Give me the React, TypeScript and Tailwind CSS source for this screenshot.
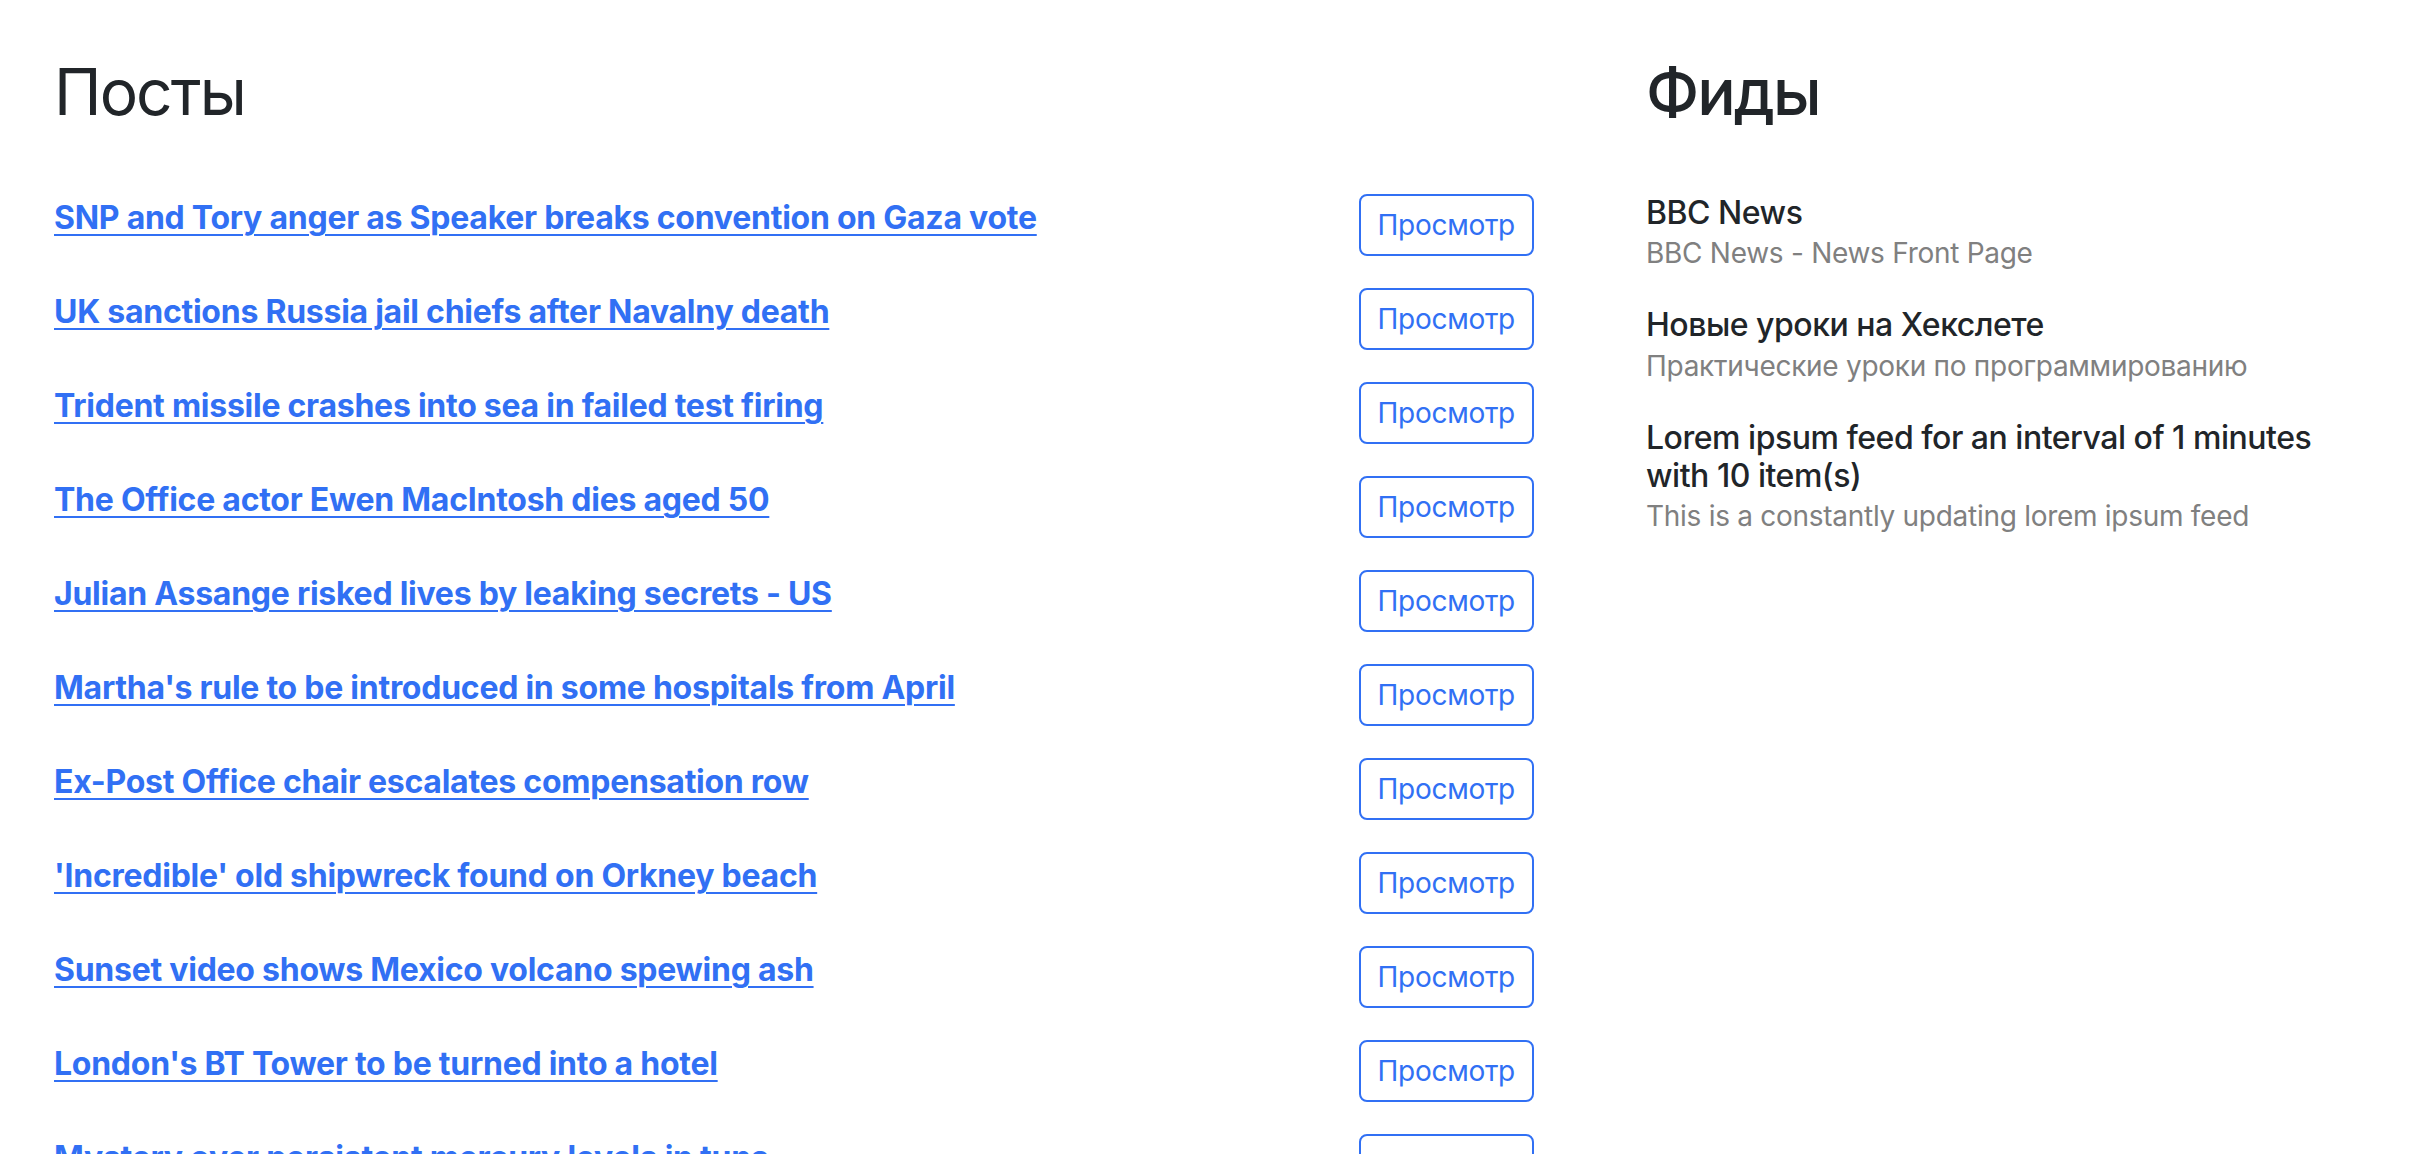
import React from "react";

const POSTS = [
  "SNP and Tory anger as Speaker breaks convention on Gaza vote",
  "UK sanctions Russia jail chiefs after Navalny death",
  "Trident missile crashes into sea in failed test firing",
  "The Office actor Ewen MacIntosh dies aged 50",
  "Julian Assange risked lives by leaking secrets - US",
  "Martha's rule to be introduced in some hospitals from April",
  "Ex-Post Office chair escalates compensation row",
  "'Incredible' old shipwreck found on Orkney beach",
  "Sunset video shows Mexico volcano spewing ash",
  "London's BT Tower to be turned into a hotel",
  "Mystery over persistent mercury levels in tuna",
  "Lorem ipsum dolor sit amet, consectetur adipiscing elit",
  "Sed do eiusmod tempor incididunt ut labore",
];

const FEEDS = [
  { title: "BBC News", description: "BBC News - News Front Page" },
  { title: "Новые уроки на Хекслете", description: "Практические уроки по программированию" },
  {
    title: "Lorem ipsum feed for an interval of 1 minutes with 10 item(s)",
    description: "This is a constantly updating lorem ipsum feed",
  },
];

export default function App() {
  return (
    <div className="min-h-screen bg-white font-['Inter','Liberation_Sans',sans-serif] text-[#212529]">
      <div className="flex pt-[22px]">
        {/* posts */}
        <div className="w-[1590px] shrink-0 pl-[22px] pr-6">
          <div className="p-8">
            <h2 className="text-[64px] leading-[1.2] font-normal tracking-[-0.03em] mb-4">Посты</h2>
          </div>
          <ul className="-mt-[1px]">
            {POSTS.map((title, i) => (
              <li key={i} className="flex items-start justify-between px-8 py-4">
                <a
                  href="#"
                  className="text-[32px] leading-[1.5] font-bold tracking-[-0.008em] text-[#3170f4] underline decoration-2 underline-offset-[5px]"
                >
                  {title}
                </a>
                <button
                  type="button"
                  className="shrink-0 h-[62px] px-[17px] border-2 border-[#3170f4] rounded-lg text-[28px] leading-[1.5] tracking-[-0.01em] text-[#3170f4] bg-white"
                >
                  Просмотр
                </button>
              </li>
            ))}
          </ul>
        </div>

        {/* feeds */}
        <div className="w-[796px] shrink-0 px-6">
          <div className="p-8">
            <h2 className="text-[64px] leading-[1.2] font-medium tracking-[-0.03em] mb-4">Фиды</h2>
          </div>
          <ul className="-mt-[1px]">
            {FEEDS.map((feed) => (
              <li key={feed.title} className="px-8 py-4">
                <h3 className="text-[32px] leading-[1.2] font-medium tracking-[-0.015em] m-0">{feed.title}</h3>
                <p className="text-[28px] leading-[1.5] tracking-[-0.01em] text-[#808080] m-0">{feed.description}</p>
              </li>
            ))}
          </ul>
        </div>
      </div>
    </div>
  );
}
